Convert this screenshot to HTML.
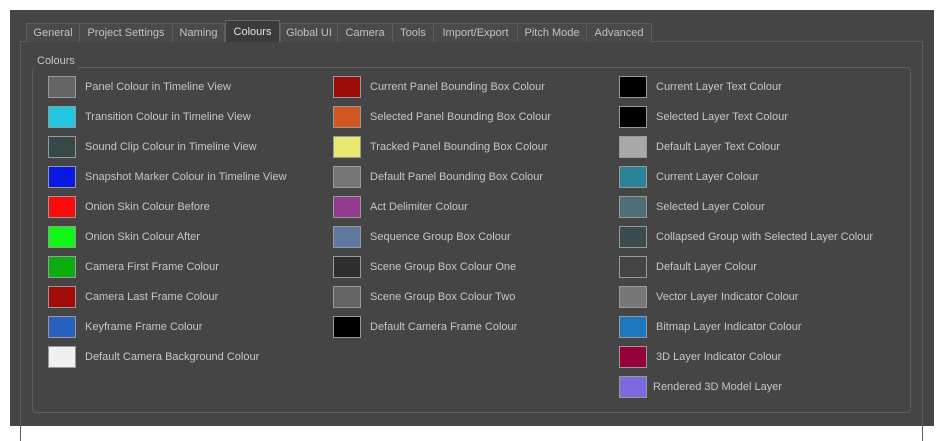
<!DOCTYPE html>
<html><head><style>
body{margin:0;width:944px;height:437px;background:#fff;position:relative;overflow:hidden;font-family:"Liberation Sans",sans-serif;font-size:11px;color:#c6c6c6}
#win{position:absolute;left:10px;top:10px;width:924px;height:416px;background:#454545}
#pane{position:absolute;left:20px;top:41px;width:903px;height:400px;border:1px solid #5c5c5c;border-bottom:none;box-sizing:border-box}
.tab{position:absolute;top:23px;height:19px;line-height:19px;text-align:center;background:#4a4a4a;border:1px solid #5c5c5c;border-bottom:none;box-sizing:border-box;color:#c2c2c2}
.tab.sel{top:20px;height:22px;line-height:22px;background:#3b3b3b;color:#e0e0e0;border-color:#666}
#grp{position:absolute;left:32px;top:67px;width:879px;height:346px;border:1px solid #5e5e5e;border-radius:4px;box-sizing:border-box}
#gt{position:absolute;left:34px;top:54px;background:#454545;padding:0 3px;line-height:14px}
.sw{position:absolute;width:28px;height:22px;border:1px solid #999;box-sizing:border-box}
.lb{position:absolute;line-height:14px;white-space:nowrap}
</style></head><body>
<div id="win"></div>
<div id="pane"></div>
<div class="tab" style="left:26px;width:54px">General</div>
<div class="tab" style="left:79px;width:94px">Project Settings</div>
<div class="tab" style="left:172px;width:53px">Naming</div>
<div class="tab" style="left:280px;width:58px">Global UI</div>
<div class="tab" style="left:337px;width:56px">Camera</div>
<div class="tab" style="left:392px;width:42px">Tools</div>
<div class="tab" style="left:433px;width:85px">Import/Export</div>
<div class="tab" style="left:517px;width:70px">Pitch Mode</div>
<div class="tab" style="left:586px;width:66px">Advanced</div>
<div class="tab sel" style="left:225px;width:55px">Colours</div>
<div id="grp"></div>
<div id="gt">Colours</div>
<div id="items"></div>
<script>
var cols=[[48,85,[["#646464","Panel Colour in Timeline View"],["#22c8e0","Transition Colour in Timeline View"],["#374848","Sound Clip Colour in Timeline View"],["#0a18e6","Snapshot Marker Colour in Timeline View"],["#ff0a0a","Onion Skin Colour Before"],["#10f818","Onion Skin Colour After"],["#0aae10","Camera First Frame Colour"],["#a40a0a","Camera Last Frame Colour"],["#2860c0","Keyframe Frame Colour"],["#f0f0f0","Default Camera Background Colour"]]],
[333,370,[["#9a0c08","Current Panel Bounding Box Colour"],["#d05820","Selected Panel Bounding Box Colour"],["#e8e870","Tracked Panel Bounding Box Colour"],["#767676","Default Panel Bounding Box Colour"],["#903a90","Act Delimiter Colour"],["#6078a0","Sequence Group Box Colour"],["#2e2e2e","Scene Group Box Colour One"],["#646464","Scene Group Box Colour Two"],["#000000","Default Camera Frame Colour"]]],
[619,656,[["#000000","Current Layer Text Colour"],["#000000","Selected Layer Text Colour"],["#a8a8a8","Default Layer Text Colour"],["#2a8498","Current Layer Colour"],["#4e6e78","Selected Layer Colour"],["#3a4c50","Collapsed Group with Selected Layer Colour"],["#444444","Default Layer Colour"],["#787878","Vector Layer Indicator Colour"],["#1e78c0","Bitmap Layer Indicator Colour"],["#98003a","3D Layer Indicator Colour"],["#8068e0","Rendered 3D Model Layer"]]]];
var h="";cols.forEach(function(c){c[2].forEach(function(it,i){var y=76+30*i;var lx=(c[0]==619&&i>=9)?(i==9?656:653):c[1];h+='<div class="sw" style="left:'+c[0]+'px;top:'+y+'px;background:'+it[0]+'"></div><div class="lb" style="left:'+lx+'px;top:'+(y+4)+'px">'+it[1]+'</div>';});});
document.getElementById("items").innerHTML=h;
</script>
</body></html>
